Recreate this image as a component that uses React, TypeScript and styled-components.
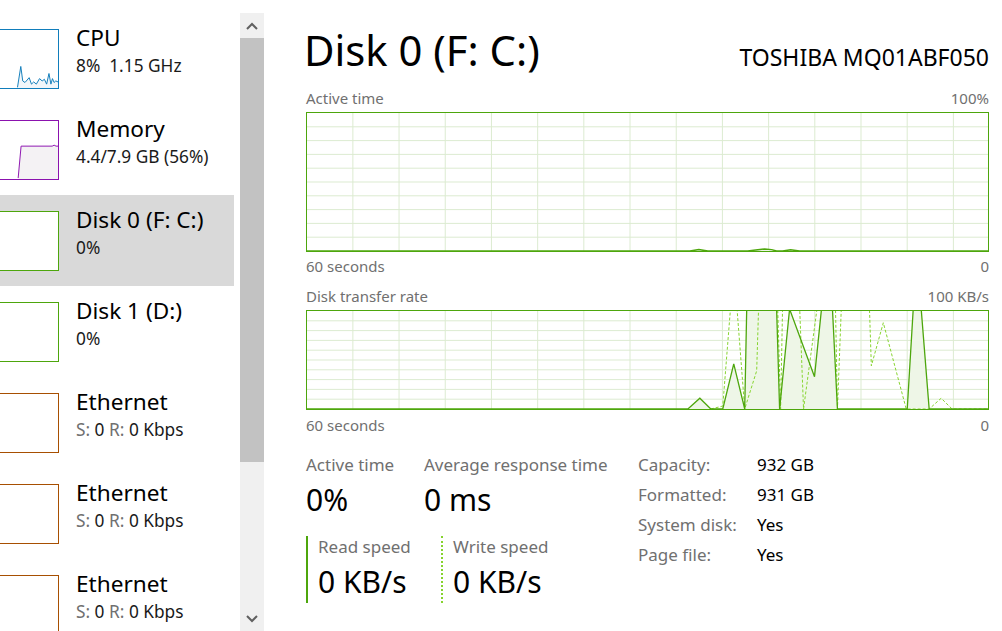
import React from 'react';
import styled, { createGlobalStyle } from 'styled-components';

const DISK = '#4da60c';
const DISK_LIGHT = '#86d32e';
const GRID = '#dcebd0';
const FILL = '#eef6e7';
const LABEL = '#707070';

const GlobalStyle = createGlobalStyle`
  html, body {
    margin: 0;
    padding: 0;
    background: #fff;
    overflow: hidden;
  }
  body {
    font-family: 'Noto Sans', 'Open Sans', sans-serif;
    color: #000;
  }
`;

type Pt = [number, number];
const toPoints = (pts: Pt[]) => pts.map((p) => p.join(',')).join(' ');

// read (solid) and write (dashed) series for the transfer chart, chart-local px
const readSeries: Pt[] = [
  [0, 100], [382, 100], [394, 89], [405, 100], [417, 100], [428, 54], [439, 100],
  [441, -2], [471, -2], [474, 100], [484, -2], [509, 67], [516, -2], [527, -2],
  [532, 100], [602, 100], [608, -2], [616, -2], [624, 100], [683, 100],
];
const writeSeries: Pt[] = [
  [405, 100], [417, 97], [425, -6], [431, -6], [439, 100], [451, 61], [453, -6],
  [472, -6], [475, 100], [477, -6], [494, -6], [498, 100], [512, -6], [530, -6],
  [532, 100], [536, -6], [564, -6], [566, 56], [578, 12], [601, 100], [624, 100],
  [636, 89], [647, 100], [683, 100],
];
const activeSeries: Pt[] = [
  [0, 140], [384, 140], [393, 138.6], [402, 140], [442, 140], [450, 139],
  [459, 138], [466, 138.6], [471, 140], [477, 140], [485, 138.8], [494, 140], [683, 140],
];

const cpuSeries: Pt[] = [
  [28.3, 59.3], [31.7, 37.7], [33.7, 52.7], [36, 54.3], [40.3, 49.3], [42.7, 56],
  [45, 53.7], [47.7, 56], [51, 50.3], [53.7, 52.7], [56, 51], [58.3, 56], [60.7, 45],
  [62.7, 56], [64.3, 50.3], [66, 54.3], [67.7, 52.7], [70, 53.7],
];
const memSeries: Pt[] = [[29, 59], [32, 26], [64, 26], [66, 25], [68, 26], [70, 26]];

type ItemData = {
  title: string;
  color: string;
  sub: React.ReactNode;
  selected?: boolean;
  series?: Pt[];
  fill?: string;
};

const Gray = styled.span`
  color: ${LABEL};
`;

const ethernetSub = (
  <>
    <Gray>S:</Gray> 0 <Gray>R:</Gray> 0 Kbps
  </>
);

const items: ItemData[] = [
  { title: 'CPU', color: '#117dbb', sub: <>8%&nbsp;&nbsp;1.15 GHz</>, series: cpuSeries, fill: '#f1f6fa' },
  { title: 'Memory', color: '#8b12ae', sub: '4.4/7.9 GB (56%)', series: memSeries, fill: '#f4f2f4' },
  { title: 'Disk 0 (F: C:)', color: DISK, sub: '0%', selected: true },
  { title: 'Disk 1 (D:)', color: DISK, sub: '0%' },
  { title: 'Ethernet', color: '#a74f01', sub: ethernetSub },
  { title: 'Ethernet', color: '#a74f01', sub: ethernetSub },
  { title: 'Ethernet', color: '#a74f01', sub: ethernetSub },
];

const Chevron = ({ up }: { up?: boolean }) => (
  <svg width="12" height="8" viewBox="0 0 12 8">
    <polyline
      points={up ? '1,7 6,2 11,7' : '1,1 6,6 11,1'}
      fill="none"
      stroke="#606060"
      strokeWidth="2"
    />
  </svg>
);

const Chart = ({ height, rows, children }: { height: number; rows: number; children?: React.ReactNode }) => {
  const w = 683;
  const hLines = Array.from({ length: rows - 1 }, (_, i) => ((i + 1) * height) / rows);
  const vLines = Array.from({ length: 14 }, (_, i) => 46 + i * 46.33);
  return (
    <Frame $h={height}>
      <svg width="100%" height="100%" viewBox={`0 0 ${w} ${height}`} preserveAspectRatio="none">
        {hLines.map((y) => (
          <line key={'h' + y} x1={0} x2={w} y1={y} y2={y} stroke={GRID} strokeWidth={1} />
        ))}
        {vLines.map((x) => (
          <line key={'v' + x} x1={x} x2={x} y1={0} y2={height} stroke={GRID} strokeWidth={1} />
        ))}
        {children}
      </svg>
    </Frame>
  );
};

const App = () => {
  return (
    <>
      <GlobalStyle />
      <Page>
        <Sidebar>
          <List>
            {items.map((it, i) => (
              <Item key={i} $selected={it.selected}>
                <Thumb $color={it.color}>
                  {it.series && (
                    <svg width="100%" height="100%" viewBox="0 0 70 60" preserveAspectRatio="none">
                      <polygon
                        points={toPoints([...it.series, [70, 60], [it.series[0][0], 60]])}
                        fill={it.fill}
                      />
                      <polyline points={toPoints(it.series)} fill="none" stroke={it.color} strokeWidth={1} />
                    </svg>
                  )}
                </Thumb>
                <ItemText>
                  <ItemTitle>{it.title}</ItemTitle>
                  <ItemSub>{it.sub}</ItemSub>
                </ItemText>
              </Item>
            ))}
          </List>
          <ScrollBar>
            <ScrollButton>
              <Chevron up />
            </ScrollButton>
            <ScrollThumb />
            <ScrollTrack />
            <ScrollButton>
              <Chevron />
            </ScrollButton>
          </ScrollBar>
        </Sidebar>

        <Main>
          <Header>
            <Title>Disk 0 (F: C:)</Title>
            <Model>TOSHIBA MQ01ABF050</Model>
          </Header>

          <ChartLabels $top={19}>
            <span>Active time</span>
            <span>100%</span>
          </ChartLabels>
          <Chart height={140} rows={10}>
            <polyline points={toPoints(activeSeries)} fill={FILL} stroke={DISK} strokeWidth={1.5} />
          </Chart>
          <ChartLabels $top={5}>
            <span>60 seconds</span>
            <span>0</span>
          </ChartLabels>

          <ChartLabels $top={7}>
            <span>Disk transfer rate</span>
            <span>100 KB/s</span>
          </ChartLabels>
          <Chart height={100} rows={10}>
            <polygon points={toPoints(readSeries)} fill={FILL} />
            <polyline points={toPoints(writeSeries)} fill="none" stroke={DISK_LIGHT} strokeWidth={1} strokeDasharray="3 2" />
            <polyline points={toPoints(readSeries)} fill="none" stroke={DISK} strokeWidth={1.3} />
          </Chart>
          <ChartLabels $top={6}>
            <span>60 seconds</span>
            <span>0</span>
          </ChartLabels>

          <Stats>
            <StatsLeft>
              <StatRow>
                <Stat $width={118}>
                  <StatLabel>Active time</StatLabel>
                  <StatValue>0%</StatValue>
                </Stat>
                <Stat>
                  <StatLabel>Average response time</StatLabel>
                  <StatValue>0 ms</StatValue>
                </Stat>
              </StatRow>
              <StatRow>
                <Speed $width={135} $dotted={false}>
                  <StatLabel>Read speed</StatLabel>
                  <StatValue>0 KB/s</StatValue>
                </Speed>
                <Speed $dotted>
                  <StatLabel>Write speed</StatLabel>
                  <StatValue>0 KB/s</StatValue>
                </Speed>
              </StatRow>
            </StatsLeft>
            <Info>
              <InfoLabel>Capacity:</InfoLabel>
              <InfoValue>932 GB</InfoValue>
              <InfoLabel>Formatted:</InfoLabel>
              <InfoValue>931 GB</InfoValue>
              <InfoLabel>System disk:</InfoLabel>
              <InfoValue>Yes</InfoValue>
              <InfoLabel>Page file:</InfoLabel>
              <InfoValue>Yes</InfoValue>
            </Info>
          </Stats>
        </Main>
      </Page>
    </>
  );
};

export default App;

const Page = styled.div`
  display: flex;
  width: 1002px;
  height: 631px;
  overflow: hidden;
  background: #fff;
`;

const Sidebar = styled.div`
  width: 265px;
  flex: none;
  display: flex;
  gap: 6px;
  padding-top: 13px;
  box-sizing: border-box;
  overflow: hidden;
`;

const List = styled.div`
  width: 245px;
  margin-left: -11px;
  flex: none;
  display: flex;
  flex-direction: column;
`;

const Item = styled.div<{ $selected?: boolean }>`
  height: 91px;
  flex: none;
  display: flex;
  gap: 17px;
  padding-top: 12px;
  box-sizing: border-box;
  background: ${(p) => (p.$selected ? '#d9d9d9' : 'transparent')};
`;

const Thumb = styled.div<{ $color: string }>`
  width: 70px;
  height: 60px;
  margin-top: 4px;
  flex: none;
  box-sizing: border-box;
  border: 1px solid ${(p) => p.$color};
  background: #fff;
  svg {
    display: block;
  }
`;

const ItemText = styled.div`
  display: flex;
  flex-direction: column;
`;

const ItemTitle = styled.div`
  font-size: 22.6px;
  line-height: 26px;
  white-space: nowrap;
`;

const ItemSub = styled.div`
  font-size: 17.3px;
  line-height: 22px;
  margin-top: 4px;
  color: #1a1a1a;
  white-space: nowrap;
`;

const ScrollBar = styled.div`
  width: 24px;
  flex: none;
  display: flex;
  flex-direction: column;
  background: #f0f0f0;
`;

const ScrollButton = styled.div`
  height: 25px;
  flex: none;
  display: flex;
  align-items: center;
  justify-content: center;
  background: #f0f0f0;
`;

const ScrollThumb = styled.div`
  height: 424px;
  flex: none;
  background: #c2c2c2;
`;

const ScrollTrack = styled.div`
  flex: 1;
`;

const Main = styled.div`
  flex: 1;
  min-width: 0;
  padding: 0 13px 0 41px;
  display: flex;
  flex-direction: column;
`;

const Header = styled.div`
  display: flex;
  justify-content: space-between;
  align-items: baseline;
  padding-top: 30px;
`;

const Title = styled.div`
  font-size: 41.8px;
  line-height: 40px;
  margin-left: -2px;
  white-space: nowrap;
`;

const Model = styled.div`
  font-size: 23px;
  line-height: 24px;
  white-space: nowrap;
`;

const ChartLabels = styled.div<{ $top: number }>`
  display: flex;
  justify-content: space-between;
  margin-top: ${(p) => p.$top}px;
  margin-bottom: 5px;
  font-size: 15px;
  line-height: 18px;
  color: ${LABEL};
`;

const Frame = styled.div<{ $h: number }>`
  height: ${(p) => p.$h}px;
  border: 1px solid ${DISK};
  box-sizing: border-box;
  overflow: hidden;
  background: #fff;
  svg {
    display: block;
  }
`;

const Stats = styled.div`
  display: flex;
  align-items: flex-start;
  margin-top: 11px;
`;

const StatsLeft = styled.div`
  width: 332px;
  flex: none;
  padding-top: 4px;
  display: flex;
  flex-direction: column;
  gap: 18px;
`;

const StatRow = styled.div`
  display: flex;
`;

const Stat = styled.div<{ $width?: number }>`
  width: ${(p) => (p.$width ? `${p.$width}px` : 'auto')};
  flex: none;
  display: flex;
  flex-direction: column;
  gap: 6px;
`;

const Speed = styled(Stat)<{ $dotted: boolean }>`
  box-sizing: border-box;
  padding: 0 0 3px 10px;
  border-left: 2px ${(p) => (p.$dotted ? `dotted ${DISK_LIGHT}` : `solid ${DISK}`)};
`;

const StatLabel = styled.div`
  font-size: 17px;
  line-height: 22px;
  color: ${LABEL};
  white-space: nowrap;
`;

const StatValue = styled.div`
  font-size: 30px;
  line-height: 36px;
  white-space: nowrap;
`;

const Info = styled.div`
  display: grid;
  grid-template-columns: 119px auto;
  grid-auto-rows: 30px;
  align-content: start;
  font-size: 17px;
  line-height: 30px;
`;

const InfoLabel = styled.div`
  color: ${LABEL};
  white-space: nowrap;
`;

const InfoValue = styled.div`
  white-space: nowrap;
`;
